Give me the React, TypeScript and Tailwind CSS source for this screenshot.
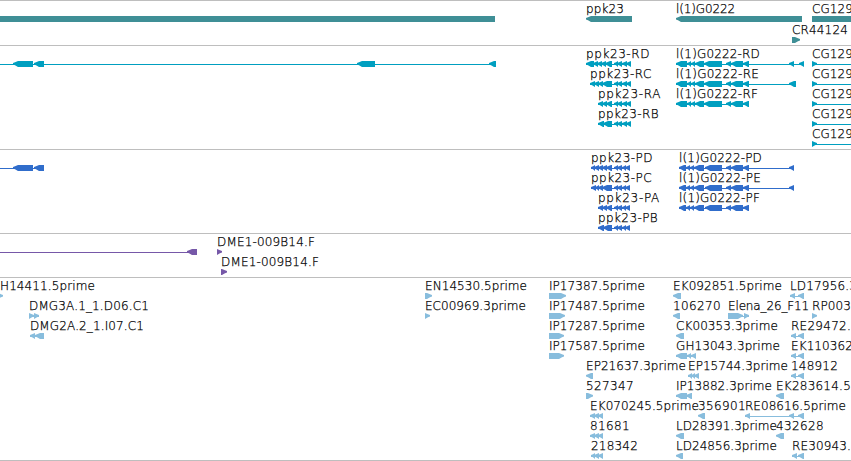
type Span = [start: number, end: number]

type Feature = {
  name?: string
  // label start and width
  at?: number
  w?: number
  dir?: 'left' | 'right' | 'none'
  exons: Span[]
}

type TrackData = {
  id: string
  color: string
  height: string
  rowHeight: string
  rows: Feature[][]
}

const FONT = '200 12px "DejaVu Sans"'
const ctx = document.createElement('canvas').getContext('2d')!

function tracking(text: string, width: number) {
  ctx.font = FONT
  return (width - ctx.measureText(text).width) / text.length
}

const geneExons: Span[] = [
  [676, 687], [687, 691], [691, 695], [695, 704], [704, 722], [726, 731], [731, 743], [743, 749],
]
const cdsExons: Span[] = [
  [679, 686], [686, 690], [690, 694], [694, 704], [705, 722], [726, 731], [731, 743], [743, 749],
]
const tail: Span[] = [[614, 618], [617, 622], [622, 627], [626, 631]]
const cdsTail: Span[] = [[614, 618], [617, 622], [622, 626], [625, 630]]
const cg: Feature = { name: 'CG129', at: 812, w: 41, dir: 'right', exons: [[812, 817], [900, 910]] }

const tracks: TrackData[] = [
  {
    id: 'gene',
    color: 'text-[#3f8f96]',
    height: 'h-[45px]',
    rowHeight: 'h-[21px]',
    rows: [
      [
        { dir: 'none', exons: [[-10, 495]] },
        { name: 'ppk23', at: 586, w: 38, exons: [[586, 632]] },
        { name: 'l(1)G0222', at: 676, w: 59, exons: [[676, 802]] },
        { name: 'CG129', at: 812, w: 41, dir: 'none', exons: [[812, 900]] },
      ],
      [{ name: 'CR44124', at: 792, w: 56, dir: 'right', exons: [[792, 800]] }],
    ],
  },
  {
    id: 'mrna',
    color: 'text-[#009fc0]',
    height: 'h-[104px]',
    rowHeight: 'h-5',
    rows: [
      [
        { exons: [[-20, -10], [13, 33], [34, 44], [357, 375], [489, 496]] },
        { name: 'ppk23-RD', at: 586, w: 64, exons: [[586, 594], [593, 598], [597, 602], [601, 606], [605, 612], ...tail] },
        { name: 'l(1)G0222-RD', at: 676, w: 84, exons: [...geneExons, [789, 794], [799, 804]] },
        cg,
      ],
      [
        { name: 'ppk23-RC', at: 590, w: 62, exons: [[590, 595], [594, 599], [598, 603], [602, 612], ...tail] },
        { name: 'l(1)G0222-RE', at: 676, w: 83, exons: [...geneExons, [789, 796]] },
        cg,
      ],
      [
        { name: 'ppk23-RA', at: 598, w: 63, exons: [[598, 603], [602, 607], [606, 612], ...tail] },
        { name: 'l(1)G0222-RF', at: 676, w: 82, exons: geneExons },
        cg,
      ],
      [{ name: 'ppk23-RB', at: 598, w: 61, exons: [[598, 604], [603, 612], ...tail] }, cg],
      [cg],
    ],
  },
  {
    id: 'cds',
    color: 'text-[#306dcb]',
    height: 'h-[84px]',
    rowHeight: 'h-5',
    rows: [
      [
        { exons: [[-20, -10], [13, 33], [34, 44]] },
        { name: 'ppk23-PD', at: 591, w: 62, exons: [[591, 595], [594, 599], [598, 603], [602, 607], [606, 612], ...cdsTail] },
        { name: 'l(1)G0222-PD', at: 679, w: 83, exons: [...cdsExons, [789, 794]] },
      ],
      [
        { name: 'ppk23-PC', at: 591, w: 61, exons: [[591, 596], [595, 599], [598, 603], [602, 612], ...cdsTail] },
        { name: 'l(1)G0222-PE', at: 679, w: 82, exons: [...cdsExons, [789, 794]] },
      ],
      [
        { name: 'ppk23-PA', at: 598, w: 62, exons: [[598, 603], [602, 607], [606, 612], ...cdsTail] },
        { name: 'l(1)G0222-PF', at: 679, w: 81, exons: cdsExons },
      ],
      [{ name: 'ppk23-PB', at: 598, w: 60, exons: [[598, 604], [603, 612], ...cdsTail] }],
    ],
  },
  {
    id: 'bac',
    color: 'text-[#7658a8]',
    height: 'h-11',
    rowHeight: 'h-5',
    rows: [
      [
        { exons: [[-20, -10], [187, 197]] },
        { name: 'DME1-009B14.F', at: 217, w: 98, dir: 'right', exons: [[217, 222]] },
      ],
      [{ name: 'DME1-009B14.F', at: 221, w: 98, dir: 'right', exons: [[221, 227]] }],
    ],
  },
  {
    id: 'est',
    color: 'text-[#88bddd]',
    height: 'h-[184px]',
    rowHeight: 'h-5',
    rows: [
      [
        { name: 'H14411.5prime', at: 0, w: 95, dir: 'right', exons: [[-4, 3]] },
        { name: 'EN14530.5prime', at: 425, w: 102, dir: 'right', exons: [[425, 432]] },
        { name: 'IP17387.5prime', at: 549, w: 96, dir: 'right', exons: [[549, 566]] },
        { name: 'EK092851.5prime', at: 673, w: 109, exons: [[673, 681]] },
        { name: 'LD17956.3', at: 790, w: 67, exons: [[790, 795], [798, 804]] },
      ],
      [
        { name: 'DMG3A.1_1.D06.C1', at: 29, w: 120, dir: 'right', exons: [[29, 34], [34, 39]] },
        { name: 'EC00969.3prime', at: 425, w: 101, dir: 'right', exons: [[425, 430]] },
        { name: 'IP17487.5prime', at: 549, w: 96, dir: 'right', exons: [[549, 565]] },
        { name: '106270', at: 673, w: 48, exons: [[673, 680]] },
        { name: 'Elena_26_F11', at: 728, w: 81, dir: 'right', exons: [[728, 743], [744, 749]] },
        { name: 'RP003', at: 812, w: 39, dir: 'right', exons: [[812, 817]] },
      ],
      [
        { name: 'DMG2A.2_1.I07.C1', at: 30, w: 114, exons: [[30, 35], [35, 44]] },
        { name: 'IP17287.5prime', at: 549, w: 96, dir: 'right', exons: [[549, 564]] },
        { name: 'CK00353.3prime', at: 676, w: 102, exons: [[676, 684]] },
        { name: 'RE29472.', at: 791, w: 60, exons: [[791, 796], [798, 804]] },
      ],
      [
        { name: 'IP17587.5prime', at: 549, w: 96, dir: 'right', exons: [[549, 564]] },
        { name: 'GH13043.3prime', at: 676, w: 104, exons: [[676, 687], [687, 691], [691, 696]] },
        { name: 'EK110362', at: 791, w: 62, exons: [[791, 796], [798, 804]] },
      ],
      [
        { name: 'EP21637.3prime', at: 586, w: 100, exons: [[586, 593]] },
        { name: 'EP15744.3prime', at: 688, w: 100, exons: [[688, 692], [691, 695], [694, 699]] },
        { name: '148912', at: 791, w: 47, exons: [[791, 796], [798, 804]] },
      ],
      [
        { name: '527347', at: 586, w: 48, dir: 'right', exons: [[586, 593]] },
        { name: 'IP13882.3prime', at: 676, w: 96, exons: [[676, 687], [686, 692]] },
        { name: 'EK283614.5', at: 776, w: 75, exons: [[776, 784]] },
      ],
      [
        { name: 'EK070245.5prime', at: 590, w: 109, exons: [[590, 595], [594, 599], [598, 603]] },
        { name: '356901', at: 698, w: 48, exons: [[698, 705]] },
        { name: 'RE08616.5prime', at: 745, w: 101, exons: [[745, 750], [789, 794], [798, 804]] },
      ],
      [
        { name: '81681', at: 590, w: 40, exons: [[590, 595], [594, 599], [598, 603]] },
        { name: 'LD28391.3prime', at: 676, w: 101, exons: [[676, 684]] },
        { name: '432628', at: 776, w: 48, exons: [[776, 784]] },
      ],
      [
        { name: '218342', at: 591, w: 47, exons: [[591, 595], [594, 599], [598, 603]] },
        { name: 'LD24856.3prime', at: 676, w: 101, exons: [[676, 683]] },
        { name: 'RE30943.', at: 792, w: 59, exons: [[792, 797], [798, 804]] },
      ],
    ],
  },
]

function exonPath([a, b]: Span, dir: Feature['dir']) {
  if (dir === 'none') return `M${a} 0H${b}V6H${a}Z`
  const head = Math.min(5, b - a)
  // slightly rounded arrow head, drawn from the flat end towards the tip
  const tip = dir === 'right' ? b : a
  const flat = dir === 'right' ? a : b
  const s = dir === 'right' ? -1 : 1
  return `M${flat} 0H${tip + s * head}L${tip + s * 2} 1.3L${tip} 2V3.5L${tip + s * 2} 4.3L${tip + s * head} 6H${flat}Z`
}

function Glyph({ exons, dir = 'left' }: Feature) {
  const start = exons[0][0]
  const end = exons[exons.length - 1][1]
  return (
    <g fill="currentColor">
      {exons.length > 1 && <rect x={start} y={3} width={end - start} height={1} />}
      {exons.map((exon) => (
        <path key={exon[0]} d={exonPath(exon, dir)} />
      ))}
    </g>
  )
}

function Row({ features, className }: { features: Feature[]; className: string }) {
  return (
    <div className={`relative ${className}`}>
      {features.map((f, i) =>
        f.name ? (
          <span
            key={i}
            className="absolute top-px text-[12px] leading-[15px] font-extralight whitespace-nowrap text-black [-webkit-text-stroke:0.25px_black]"
            style={{ left: f.at, letterSpacing: tracking(f.name, f.w ?? 0) }}
          >
            {f.name}
          </span>
        ) : null,
      )}
      <svg className="absolute top-[15px] left-0" width="851" height="6" viewBox="0 0 851 6">
        {features.map((f, i) => (
          <Glyph key={i} {...f} />
        ))}
      </svg>
    </div>
  )
}

export default function App() {
  return (
    <div className="h-[461px] w-[851px] overflow-hidden bg-white font-['DejaVu_Sans',sans-serif]">
      {tracks.map((track) => (
        <section
          key={track.id}
          className={`border-t border-[#bebebe] last:border-b ${track.height} ${track.color}`}
        >
          {track.rows.map((row, i) => (
            <Row key={i} features={row} className={track.rowHeight} />
          ))}
        </section>
      ))}
    </div>
  )
}
